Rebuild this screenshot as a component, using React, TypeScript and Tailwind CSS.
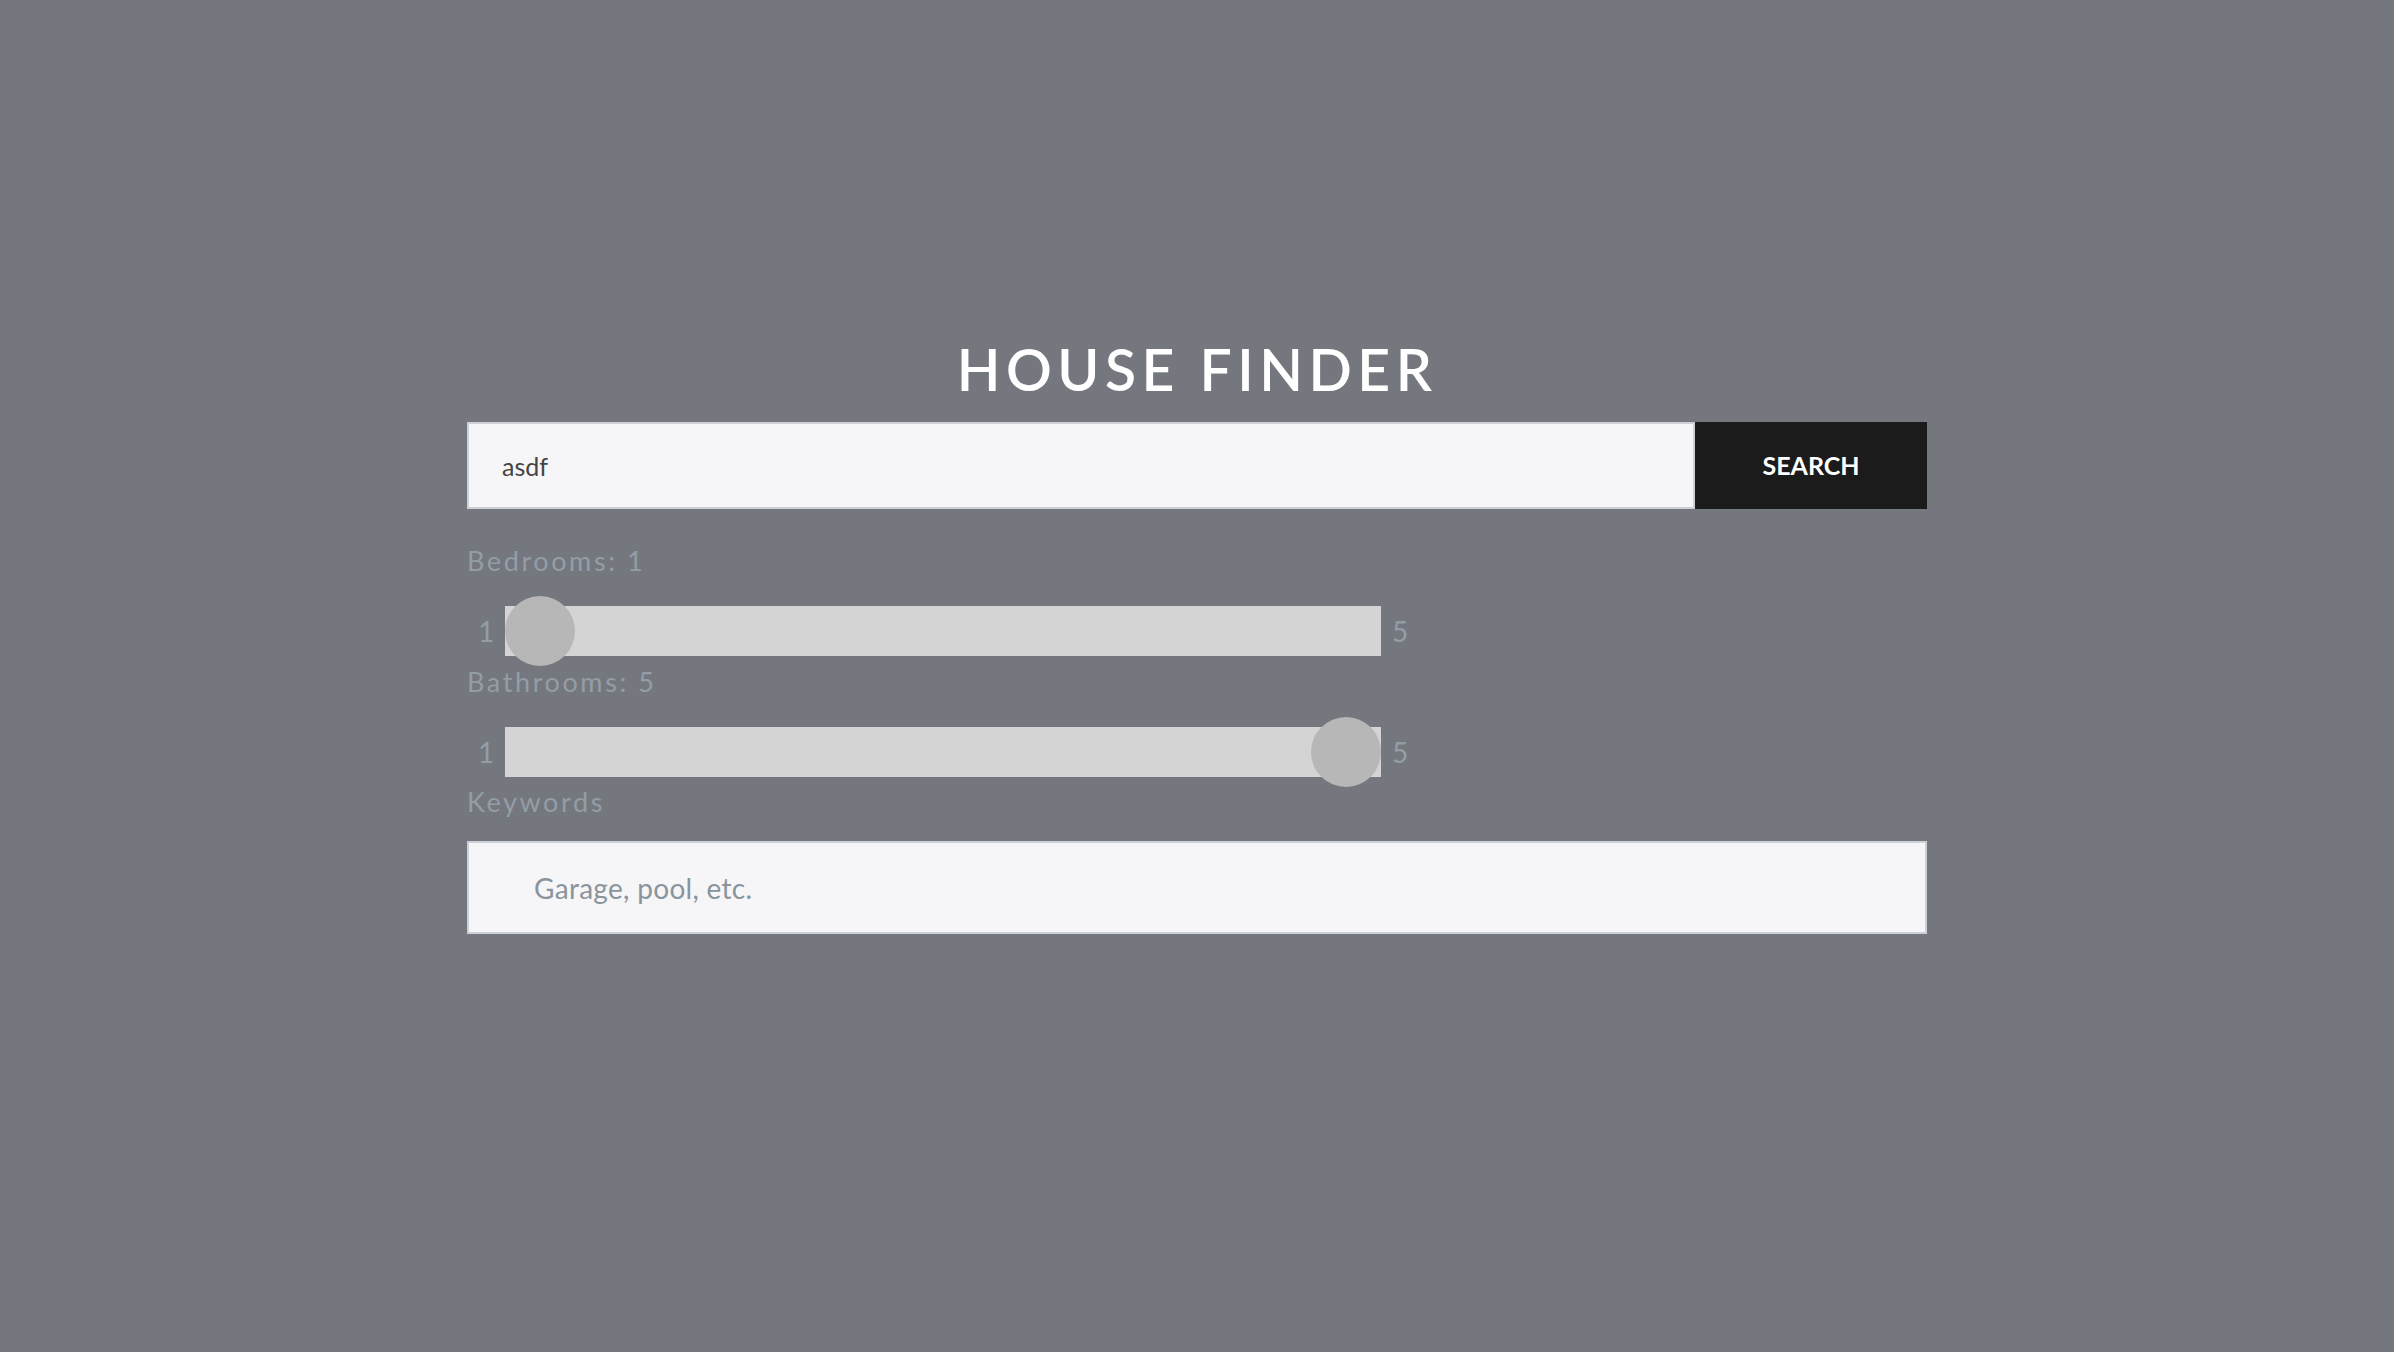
import { useState } from "react";

interface RangeProps {
    label : string
    value : number
    min : number
    max : number
    className? : string
}

function RangeRow({ label, value, min, max, className = '' } : RangeProps) {
    const pct = (value - min) / (max - min)

    return (
        <div className={className}>
            <div className="text-[27px] leading-[32px] tracking-[2.6px] text-[#939da6]">
                {label}: {value}
            </div>
            <div className="flex items-center h-[70px] mt-[19px] text-[28px] text-[#939da6]">
                <span className="w-[38px] text-center">{min}</span>
                <div className="relative w-[876px] h-[50px] bg-[#d4d4d4]">
                    {/* thumb sits over the track */}
                    <div
                        className="absolute top-1/2 -translate-y-1/2 w-[70px] h-[70px] rounded-full bg-[#b7b7b7]"
                        style={{ left : `calc(${pct * 100}% - ${pct * 70}px)` }}
                    />
                </div>
                <span className="ml-[11px]">{max}</span>
            </div>
        </div>
    )
}

export default function App() {
    const [query, setQuery] = useState('asdf')
    const [keywords, setKeywords] = useState('')

    return (
        <div className="min-h-screen w-full bg-[#75777f] font-['Lato','Open_Sans',sans-serif]">
            <div className="w-[1460px] mx-auto pt-[338px]">
                <h1 className="text-center text-white text-[57px] leading-[62px] tracking-[5.5px] font-semibold">
                    HOUSE FINDER
                </h1>

                <form className="flex mt-[22px] h-[87px]" onSubmit={ (e) => e.preventDefault() }>
                    <input
                        type="text"
                        value={query}
                        onChange={ (e) => setQuery(e.target.value) }
                        className="flex-1 h-full bg-[#f6f6f8] border-2 border-[#cdd0d6] pl-[33px] text-[25px] text-[#444] outline-none"
                    />
                    <button
                        type="submit"
                        className="w-[232px] h-full bg-[#1b1b1b] text-white text-[25px] font-bold"
                    >
                        SEARCH
                    </button>
                </form>

                <RangeRow label="Bedrooms" value={1} min={1} max={5} className="mt-[36px]" />
                <RangeRow label="Bathrooms" value={5} min={1} max={5} />

                <div className="text-[27px] leading-[32px] tracking-[2.6px] text-[#939da6] -mt-[1px]">
                    Keywords
                </div>
                <input
                    type="text"
                    value={keywords}
                    onChange={ (e) => setKeywords(e.target.value) }
                    placeholder="Garage, pool, etc."
                    className="mt-[23px] w-full h-[93px] bg-[#f6f6f8] border-2 border-[#cdd0d6] pl-[65px] text-[28px] tracking-[0.3px] text-[#444] placeholder:text-[#8a949c] outline-none"
                />
            </div>
        </div>
    )
}
